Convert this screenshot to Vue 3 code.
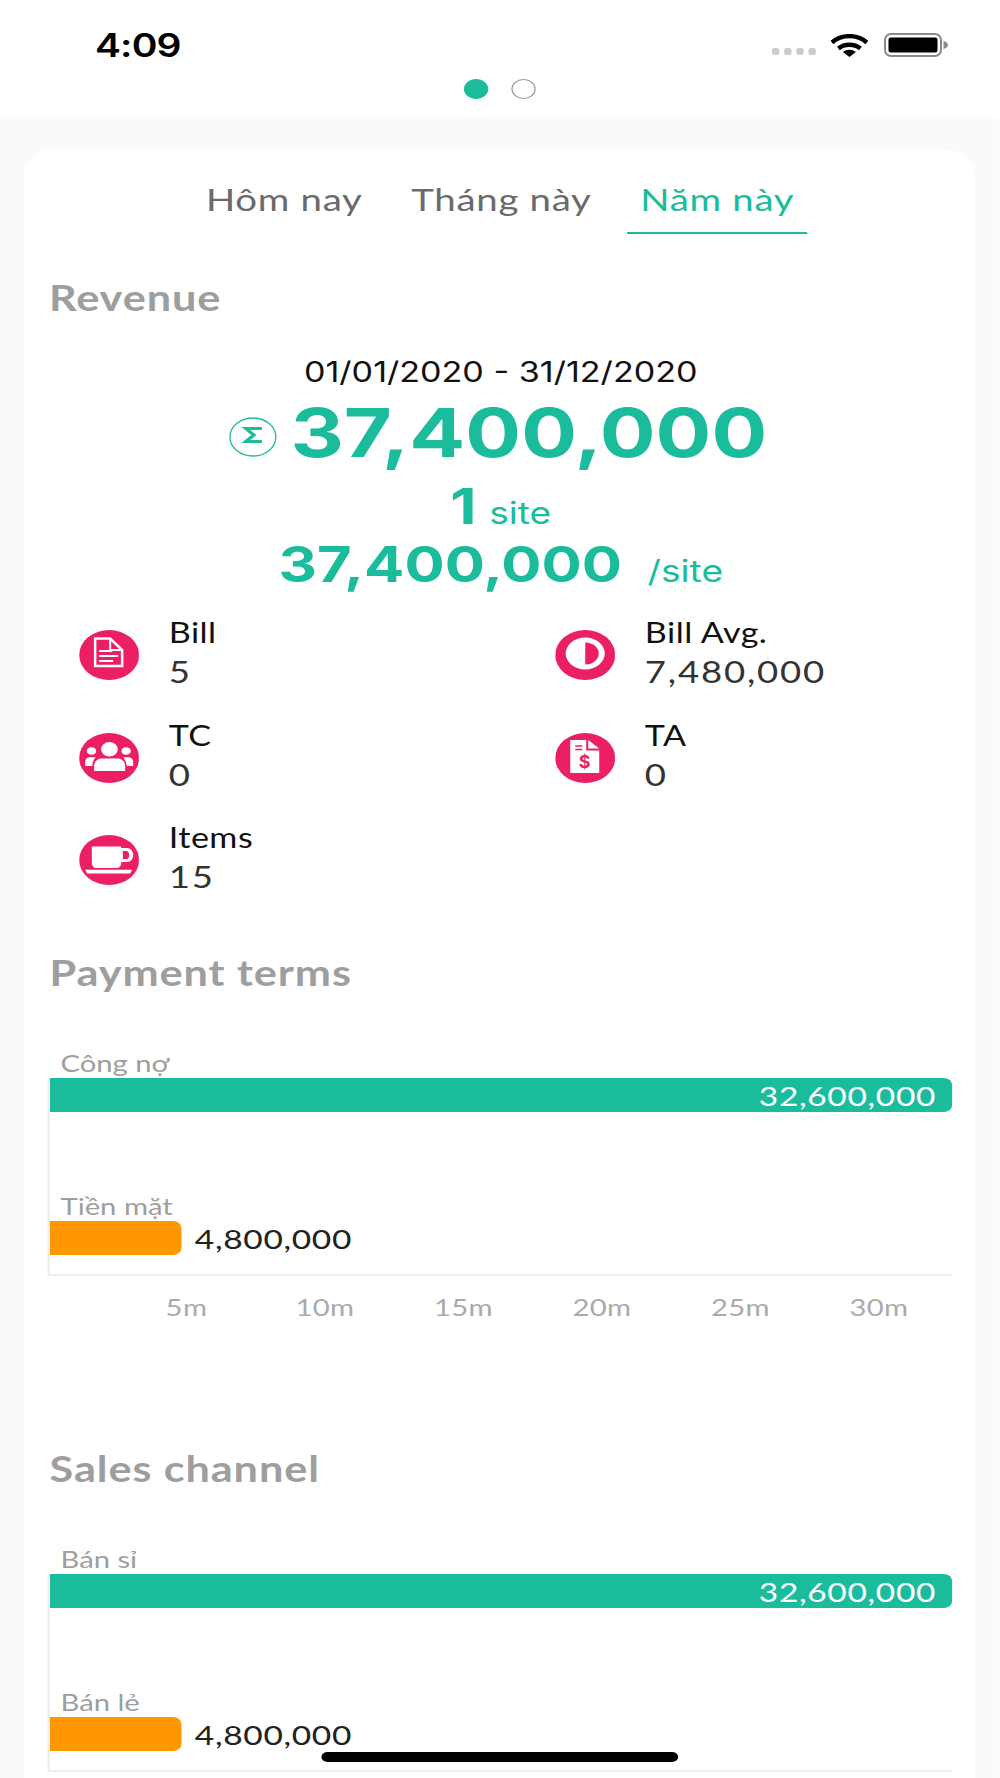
<script setup>
const tabs = [
  { label: "Hôm nay", active: false },
  { label: "Tháng này", active: false },
  { label: "Năm này", active: true },
];

const stats = [
  { label: "Bill", value: "5", icon: "doc" },
  { label: "Bill Avg.", value: "7,480,000", icon: "half" },
  { label: "TC", value: "0", icon: "group" },
  { label: "TA", value: "0", icon: "sheet" },
  { label: "Items", value: "15", icon: "cup" },
];

const charts = [
  {
    title: "Payment terms",
    ticks: ["5m", "10m", "15m", "20m", "25m", "30m"],
    bars: [
      { label: "Công nợ", value: "32,600,000", width: 100, color: "#1abc9c", inside: true },
      { label: "Tiền mặt", value: "4,800,000", width: 14.55, color: "#ff9800", inside: false },
    ],
  },
  {
    title: "Sales channel",
    ticks: [],
    bars: [
      { label: "Bán sỉ", value: "32,600,000", width: 100, color: "#1abc9c", inside: true },
      { label: "Bán lẻ", value: "4,800,000", width: 14.55, color: "#ff9800", inside: false },
    ],
  },
];
</script>

<template>
  <div class="screen">
    <header class="top">
      <div class="status">
        <span class="time">4:09</span>
        <div class="status-right">
          <div class="signal"><i></i><i></i><i></i><i></i></div>
          <svg class="wifi" viewBox="0 0 38 23" preserveAspectRatio="none">
            <path d="M1.5 8.5C11 0 27 0 36.500 8.500" fill="none" stroke="#000" stroke-width="4.400" />
            <path d="M8 14.500C14 9.500 24 9.500 30 14.500" fill="none" stroke="#000" stroke-width="4.400" />
            <path d="M12.500 18L19 23L25.500 18C21.500 15 16.500 15 12.500 18Z" fill="#000" />
          </svg>
          <svg class="battery" viewBox="0 0 64 24" preserveAspectRatio="none">
            <rect x="1" y="1" width="56" height="22" rx="6" fill="none" stroke="#8a8a8a" stroke-width="2" />
            <rect x="4.500" y="4.500" width="49" height="15" rx="2.500" fill="#000" />
            <path d="M59.500 8C62.500 9 64 10.500 64 12C64 13.500 62.500 15 59.500 16Z" fill="#8a8a8a" />
          </svg>
        </div>
      </div>
      <div class="pager">
        <span class="dot on"></span>
        <span class="dot"></span>
      </div>
    </header>

    <main class="page">
      <div class="card">
        <nav class="tabs">
          <span v-for="tab in tabs" :key="tab.label" class="tab" :class="{ active: tab.active }">{{ tab.label }}</span>
        </nav>

        <h2 class="title first">Revenue</h2>
        <div class="date">01/01/2020 - 31/12/2020</div>
        <div class="total">
          <svg class="sigma" viewBox="0 0 48 40" preserveAspectRatio="none">
            <ellipse cx="24" cy="20" rx="23" ry="19" fill="none" stroke="#1abc9c" stroke-width="1.300" />
            <polyline points="33,11.500 17,11.500 25,18 17,24.500 33,24.500" fill="none" stroke="#1abc9c" stroke-width="3.200" />
          </svg>
          <span>37,400,000</span>
        </div>
        <div class="sub">
          <strong>1</strong>
          <span>site</span>
        </div>
        <div class="sub per">
          <strong>37,400,000</strong>
          <span>/site</span>
        </div>

        <div class="stats">
          <div v-for="stat in stats" :key="stat.label" class="stat">
            <svg class="stat-icon" viewBox="0 0 60 50" preserveAspectRatio="none">
              <ellipse cx="30" cy="25" rx="30" ry="25" fill="#ec1f63" />
              <g v-if="stat.icon === 'doc'">
                <path d="M16 8.500H31L43 20V36H16Z" fill="none" stroke="#fff" stroke-width="2.500" />
                <path d="M31 8.500V20H43" fill="none" stroke="#fff" stroke-width="2" />
                <path d="M20 21H33M20 26H39M20 31H34" stroke="#fff" stroke-width="2" />
              </g>
              <g v-if="stat.icon === 'half'">
                <ellipse cx="30" cy="23.500" rx="19.500" ry="16" fill="#fff" />
                <path d="M30 12.500C38 12.500 43.500 17.500 43.500 23.500C43.500 29.500 38 34.500 30 34.500Z" fill="#ec1f63" />
              </g>
              <g v-if="stat.icon === 'group'" fill="#fff">
                <ellipse cx="30.300" cy="16.300" rx="8.300" ry="7.300" />
                <ellipse cx="12.300" cy="18" rx="4.700" ry="3.800" />
                <ellipse cx="47" cy="18" rx="4.700" ry="3.800" />
                <path d="M15 38V33C15 28 19 25.500 23 25.500H38C42 25.500 46 28 46 33V38Z" />
                <path d="M6 33V29C6 26 8 24.300 11 24.300H16.500C14.500 26.500 13.500 29 13 33Z" />
                <path d="M54 33V29C54 26 52 24.300 49 24.300H44C46 26.500 47 29 47.500 33Z" />
              </g>
              <g v-if="stat.icon === 'cup'" fill="#fff">
                <path d="M12.700 11.500H42V28C42 31 40 33 37 33H17.700C14.700 33 12.700 31 12.700 28Z" />
                <path fill-rule="evenodd" d="M42 13H48C51.500 13 54 16 54 20C54 24 51.500 27 48 27H41ZM43.700 16V24H47.500C49 24 50 22 50 20C50 18 49 16 47.500 16Z" />
                <path d="M6 34.800H53L51 38.500H8Z" />
              </g>
              <g v-if="stat.icon === 'sheet'">
                <path d="M15 7H31V17.500H44V40H15Z" fill="#fff" />
                <path d="M33 7L44 15.500H33Z" fill="#fff" />
                <path d="M20 13H27M20 16.500H27" stroke="#ec1f63" stroke-width="1.600" />
                <text x="29.500" y="35" text-anchor="middle" class="dollar">$</text>
              </g>
            </svg>
            <div class="stat-text">
              <div class="stat-label">{{ stat.label }}</div>
              <div class="stat-value">{{ stat.value }}</div>
            </div>
          </div>
        </div>

        <section v-for="chart in charts" :key="chart.title" class="chart">
          <h2 class="title">{{ chart.title }}</h2>
          <div class="plot">
            <div v-for="bar in chart.bars" :key="bar.label" class="row">
              <div class="row-label">{{ bar.label }}</div>
              <div class="track">
                <div class="bar" :style="{ width: bar.width + '%', background: bar.color }">
                  <span v-if="bar.inside" class="in">{{ bar.value }}</span>
                </div>
                <span v-if="!bar.inside" class="out">{{ bar.value }}</span>
              </div>
            </div>
          </div>
          <div v-if="chart.ticks.length" class="ticks">
            <span v-for="tick in chart.ticks" :key="tick">{{ tick }}</span>
          </div>
        </section>
      </div>
    </main>

    <div class="home"></div>
  </div>
</template>

<style scoped>
/* the shot is a phone screen stretched sideways, so lay out at 821px and widen */
.screen {
  position: relative;
  width: 821.3px;
  height: 1778px;
  overflow: hidden;
  background: #fff;
  font-family: Lato, "Noto Sans", sans-serif;
  transform: scaleX(1.2176);
  transform-origin: left top;
}

.top {
  height: 119px;
  padding-top: 25px;
  box-sizing: border-box;
  background: #fff;
}

.status {
  display: flex;
  justify-content: space-between;
  align-items: center;
  height: 40px;
  padding: 0 42.7px 0 78px;
}

.time {
  font-family: Inter, sans-serif;
  font-size: 32px;
  font-weight: 600;
  letter-spacing: -0.7px;
  color: #000;
}

.status-right {
  display: flex;
  align-items: center;
}

.signal {
  display: flex;
  gap: 3.600px;
  margin-top: 13px;
  margin-right: 11.500px;
}

.signal i {
  width: 6.500px;
  height: 7px;
  border-radius: 2px;
  background: #ccc;
}

.wifi {
  width: 31.200px;
  height: 23px;
  margin-right: 13px;
}

.battery {
  width: 52.600px;
  height: 24px;
}

.pager {
  display: flex;
  justify-content: center;
  gap: 19.400px;
  margin-top: 14px;
}

.dot {
  width: 19.700px;
  height: 20px;
  box-sizing: border-box;
  border: 1px solid #999;
  border-radius: 50%;
}

.dot.on {
  background: #1abc9c;
  border-color: #1abc9c;
}

.page {
  height: 1659px;
  padding: 30px 20.500px 0 19.700px;
  box-sizing: border-box;
  background: #fafafa;
}

.card {
  height: 1629px;
  padding: 30px 19px 0 21px;
  box-sizing: border-box;
  background: #fff;
  border-radius: 26px 26px 0 0;
}

.tabs {
  display: flex;
  justify-content: center;
  gap: 19px;
  padding-right: 1px;
}

.tab {
  padding: 0 10.500px 13px;
  border-bottom: 2.500px solid transparent;
  font-size: 31.500px;
  line-height: 40px;
  letter-spacing: 0.6px;
  color: #6a6a6a;
}

.tab.active {
  color: #1abc9c;
  border-bottom-color: #1abc9c;
}

.title {
  margin: 56px 0 -4px;
  font-size: 35.500px;
  line-height: 44px;
  letter-spacing: 0.75px;
  font-weight: 700;
  color: #9e9e9e;
}

.title.first {
  margin-top: 42px;
  margin-left: -0.500px;
}

.date {
  margin-top: 39px;
  font-family: Inter, sans-serif;
  font-size: 28px;
  line-height: 34px;
  color: #111;
  text-align: center;
}

.total {
  display: flex;
  justify-content: center;
  align-items: center;
  gap: 10.800px;
  margin-top: 9px;
  padding-right: 4px;
  font-family: Inter, sans-serif;
  font-size: 68px;
  line-height: 68px;
  font-weight: 700;
  color: #1abc9c;
}

.sigma {
  width: 39.400px;
  height: 40px;
  margin-top: 10px;
}

.sub {
  display: flex;
  justify-content: center;
  align-items: baseline;
  gap: 10.400px;
  margin-top: 15px;
  font-family: Inter, sans-serif;
  color: #1abc9c;
}

.sub.per {
  gap: 21px;
  margin-top: 9px;
}

.sub strong {
  font-size: 50px;
  line-height: 50px;
  font-weight: 700;
}

.sub.per strong {
  font-size: 49px;
}

.sub span {
  font-size: 30.500px;
}

.stats {
  display: grid;
  grid-template-columns: 391px 1fr;
  row-gap: 26.500px;
  margin-top: 24px;
  padding-left: 24.200px;
}

.stat {
  display: flex;
  gap: 24.400px;
  height: 76px;
}

.stat-icon {
  flex: none;
  width: 49.300px;
  height: 50px;
  margin-top: 16.300px;
}

.dollar {
  font-family: Inter, sans-serif;
  font-size: 18px;
  font-weight: 700;
  fill: #ec1f63;
}

.stat-label {
  height: 39px;
  font-size: 28px;
  line-height: 36px;
  letter-spacing: 0.4px;
  color: #111;
}

.stat-value {
  font-size: 30px;
  line-height: 37px;
  letter-spacing: 1.500px;
  color: #333;
}

.plot {
  position: relative;
  margin-top: 58px;
  padding-bottom: 19px;
  border-bottom: 2px solid #eee;
  display: flex;
  flex-direction: column;
  gap: 80px;
}

.plot::before {
  content: "";
  position: absolute;
  left: -1.500px;
  top: 29px;
  bottom: -2px;
  width: 1.500px;
  background: #eee;
}

.row-label {
  height: 28px;
  margin-bottom: 1px;
  padding-left: 9px;
  font-size: 24px;
  line-height: 28px;
  color: #9e9e9e;
}

.track {
  display: flex;
  align-items: center;
  gap: 11.500px;
  height: 34px;
}

.bar {
  display: flex;
  justify-content: flex-end;
  align-items: center;
  height: 100%;
  border-radius: 0 7px 7px 0;
}

.in,
.out {
  font-size: 27.500px;
  letter-spacing: 0.55px;
}

.in {
  padding-right: 13px;
  color: #fff;
}

.out {
  color: #222;
}

.ticks {
  display: flex;
  margin-top: 16.500px;
  padding-left: 55.600px;
}

.ticks span {
  width: 113.750px;
  font-size: 24px;
  line-height: 28px;
  letter-spacing: 0.3px;
  color: #aaa;
  text-align: center;
}

.chart + .chart .title {
  margin-top: 126.500px;
}

.home {
  position: absolute;
  left: 263.600px;
  bottom: 16px;
  width: 293px;
  height: 10px;
  border-radius: 5px;
  background: #000;
}
</style>

<style>
html,
body {
  background: #fff;
}
</style>
